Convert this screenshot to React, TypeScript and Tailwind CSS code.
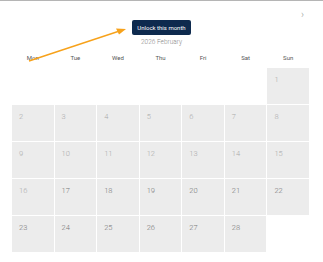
import React from "react";

const days = ["Mon", "Tue", "Wed", "Thu", "Fri", "Sat", "Sun"];

export default function App() {
  const cells: (number | null)[] = [null, null, null, null, null, null, 1];
  for (let d = 2; d <= 28; d++) cells.push(d);
  cells.push(null);
  return (
    <div
      className="relative w-[323px] h-[262px] bg-white border-t border-[#b5b5b5] overflow-hidden"
      style={{ fontFamily: "Roboto, 'Liberation Sans', sans-serif" }}
    >
      <div className="absolute right-[19px] top-[6px] text-[10px] font-light text-[#999]">›</div>
      <div className="flex flex-col items-center pt-[19px]">
        <button className="h-[15px] px-[5px] rounded-[2px] bg-[#0e2a4e] text-white text-[6px] font-normal leading-[15px]">
          Unlock this month
        </button>
        <div className="mt-[2px] text-[6.5px] font-light leading-[10px] text-[#888]">2026 February</div>
      </div>
      <div className="ml-[12px] w-[297px] grid grid-cols-7 gap-x-px mt-[7px]">
        {days.map((d) => (
          <div key={d} className="text-center text-[6px] leading-[8px] text-[#555]">
            {d}
          </div>
        ))}
      </div>
      <div className="ml-[12px] w-[297px] grid grid-cols-7 gap-px mt-[6px]">
        {cells.map((c, i) => (
          <div
            key={i}
            className={
              "h-[36px] pl-[7px] pt-[7px] text-[7.5px] font-light leading-[9px] " +
              (c === null ? "bg-white" : "bg-[#ececec]") +
              (c !== null && c >= 17 ? " text-[#777]" : " text-[#aaa]")
            }
          >
            {c}
          </div>
        ))}
      </div>
      <svg className="absolute left-0 top-0 pointer-events-none" width="323" height="262">
        <line x1="29" y1="60" x2="118" y2="30.5" stroke="#f7a21b" strokeWidth="1.4" />
        <polygon points="126,28 116,27.5 119,33.5" fill="#f7a21b" />
      </svg>
    </div>
  );
}
